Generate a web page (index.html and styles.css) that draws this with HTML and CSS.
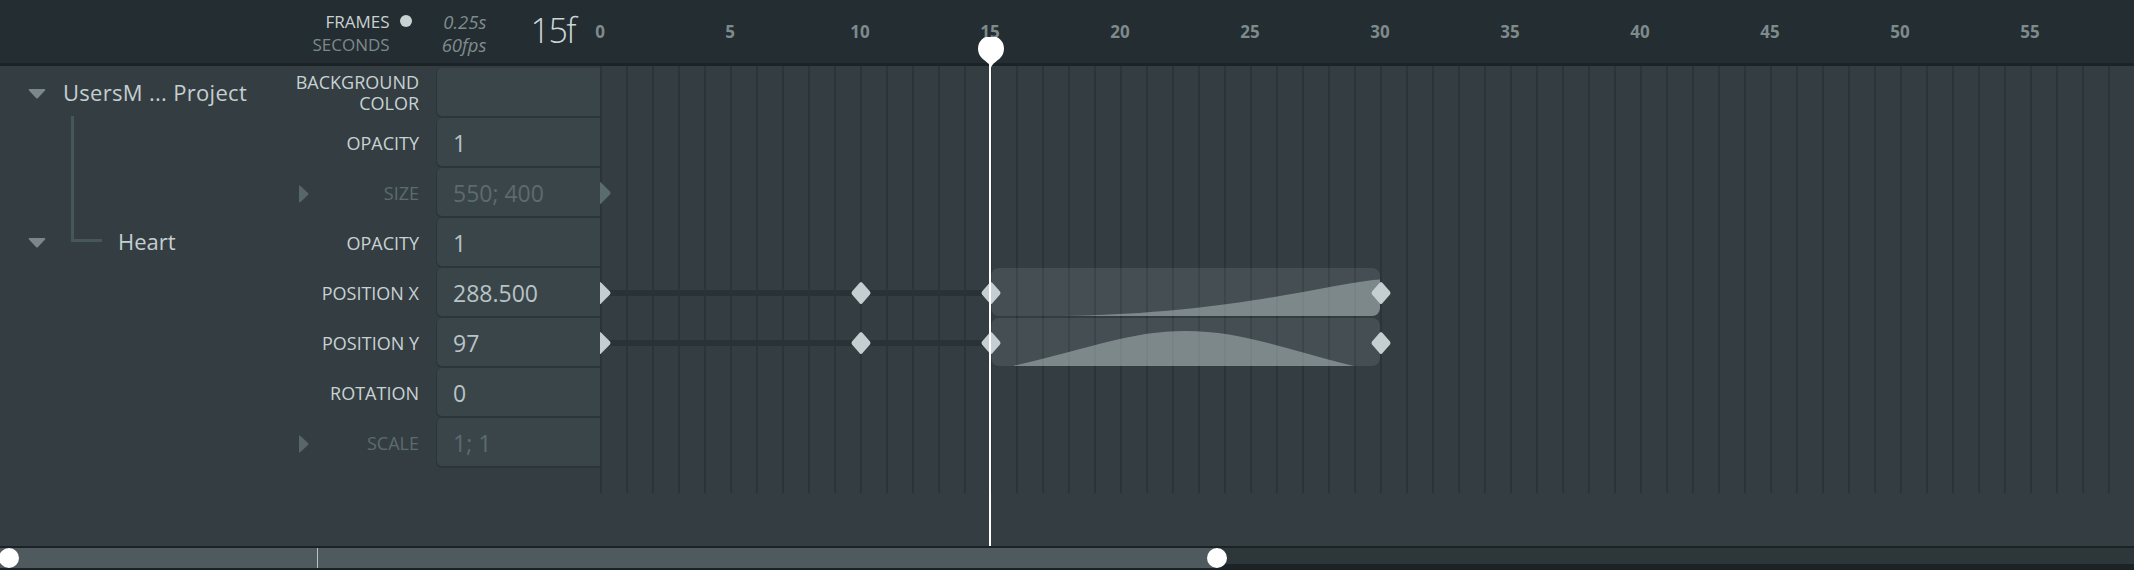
FILE: index.html
```html
<!DOCTYPE html>
<html>
<head>
<meta charset="utf-8">
<title>Timeline</title>
<link rel="stylesheet" href="styles.css">
</head>
<body>
<div class="app">
  <header class="topbar">
    <div class="timefmt">
      <div class="fmt-labels">
        <div class="fmt-row on">FRAMES<span class="dot"></span></div>
        <div class="fmt-row">SECONDS<span class="dot-gap"></span></div>
      </div>
      <div class="fmt-values"><div>0.25s</div><div>60fps</div></div>
      <div class="current">15f</div>
    </div>
    <div class="ruler">
      <div class="tick"><span>0</span></div>
      <div class="tick"><span>5</span></div>
      <div class="tick"><span>10</span></div>
      <div class="tick"><span>15</span></div>
      <div class="tick"><span>20</span></div>
      <div class="tick"><span>25</span></div>
      <div class="tick"><span>30</span></div>
      <div class="tick"><span>35</span></div>
      <div class="tick"><span>40</span></div>
      <div class="tick"><span>45</span></div>
      <div class="tick"><span>50</span></div>
      <div class="tick"><span>55</span></div>
    </div>
  </header>

  <main class="body">
    <aside class="tree">
      <div class="node root">
        <svg class="tri" width="18" height="10" viewBox="0 0 18 10"><path d="M1.5 0H16.5Q18 0 17 1.5L10 9Q9 10 8 9L1 1.5Q0 0 1.5 0Z"/></svg>
        <span class="name">UsersM ... Project</span>
      </div>
      <div class="stem"></div>
      <div class="node child">
        <svg class="tri" width="18" height="10" viewBox="0 0 18 10"><path d="M1.5 0H16.5Q18 0 17 1.5L10 9Q9 10 8 9L1 1.5Q0 0 1.5 0Z"/></svg>
        <span class="elbow"></span>
        <span class="name">Heart</span>
      </div>
    </aside>

    <section class="props">
      <div class="prop">
        <div class="label"><span class="text">BACKGROUND<br>COLOR</span></div>
        <div class="value"></div>
      </div>
      <div class="prop">
        <div class="label"><span class="text">OPACITY</span></div>
        <div class="value">1</div>
      </div>
      <div class="prop dim">
        <div class="label"><svg class="exp" width="10" height="18" viewBox="0 0 10 18"><path d="M0 1.5Q0 0 1.5 1L9 8Q10 9 9 10L1.5 17Q0 18 0 16.5Z"/></svg><span class="text">SIZE</span></div>
        <div class="value">550; 400</div>
      </div>
      <div class="prop">
        <div class="label"><span class="text">OPACITY</span></div>
        <div class="value">1</div>
      </div>
      <div class="prop">
        <div class="label"><span class="text">POSITION X</span></div>
        <div class="value">288.500</div>
      </div>
      <div class="prop">
        <div class="label"><span class="text">POSITION Y</span></div>
        <div class="value">97</div>
      </div>
      <div class="prop">
        <div class="label"><span class="text">ROTATION</span></div>
        <div class="value">0</div>
      </div>
      <div class="prop dim">
        <div class="label"><svg class="exp" width="10" height="18" viewBox="0 0 10 18"><path d="M0 1.5Q0 0 1.5 1L9 8Q10 9 9 10L1.5 17Q0 18 0 16.5Z"/></svg><span class="text">SCALE</span></div>
        <div class="value">1; 1</div>
      </div>
    </section>

    <section class="timeline">
      <div class="grid">
        <div class="track"></div>
        <div class="track"></div>
        <div class="track">
          <svg class="kf-start dim" width="11" height="22" viewBox="0 0 11 22"><path d="M0 0Q1 0 2 1.5L10 9.5Q11 11 10 12.5L2 20.5Q1 22 0 22Z"/></svg>
        </div>
        <div class="track"></div>
        <div class="track">
          <div class="bar" style="left:0px;width:390px"></div>
          <div class="curve" style="left:391px;width:389px">
            <svg width="389" height="48" viewBox="0 0 389 48"><path d="M70 48C230 46 320 20 382 12Q386 11.5 389 11.5V48Z"/></svg>
          </div>
          <svg class="kf-start" width="11" height="22" viewBox="0 0 11 22"><path d="M0 0Q1 0 2 1.5L10 9.5Q11 11 10 12.5L2 20.5Q1 22 0 22Z"/></svg>
          <svg class="kf" style="left:251px" width="20" height="22" viewBox="0 0 20 22"><path d="M10 0Q11 0 12 1.5L19 9.5Q20 11 19 12.5L12 20.5Q11 22 10 22Q9 22 8 20.5L1 12.5Q0 11 1 9.5L8 1.5Q9 0 10 0Z"/></svg>
          <svg class="kf" style="left:381px" width="20" height="22" viewBox="0 0 20 22"><path d="M10 0Q11 0 12 1.5L19 9.5Q20 11 19 12.5L12 20.5Q11 22 10 22Q9 22 8 20.5L1 12.5Q0 11 1 9.5L8 1.5Q9 0 10 0Z"/></svg>
          <svg class="kf" style="left:771px" width="20" height="22" viewBox="0 0 20 22"><path d="M10 0Q11 0 12 1.5L19 9.5Q20 11 19 12.5L12 20.5Q11 22 10 22Q9 22 8 20.5L1 12.5Q0 11 1 9.5L8 1.5Q9 0 10 0Z"/></svg>
        </div>
        <div class="track">
          <div class="bar" style="left:0px;width:390px"></div>
          <div class="curve" style="left:391px;width:389px">
            <svg width="389" height="48" viewBox="0 0 389 48"><path d="M22 48C100 30 140 13 194 13C250 13 290 30 363 48Z"/></svg>
          </div>
          <svg class="kf-start" width="11" height="22" viewBox="0 0 11 22"><path d="M0 0Q1 0 2 1.5L10 9.5Q11 11 10 12.5L2 20.5Q1 22 0 22Z"/></svg>
          <svg class="kf" style="left:251px" width="20" height="22" viewBox="0 0 20 22"><path d="M10 0Q11 0 12 1.5L19 9.5Q20 11 19 12.5L12 20.5Q11 22 10 22Q9 22 8 20.5L1 12.5Q0 11 1 9.5L8 1.5Q9 0 10 0Z"/></svg>
          <svg class="kf" style="left:381px" width="20" height="22" viewBox="0 0 20 22"><path d="M10 0Q11 0 12 1.5L19 9.5Q20 11 19 12.5L12 20.5Q11 22 10 22Q9 22 8 20.5L1 12.5Q0 11 1 9.5L8 1.5Q9 0 10 0Z"/></svg>
          <svg class="kf" style="left:771px" width="20" height="22" viewBox="0 0 20 22"><path d="M10 0Q11 0 12 1.5L19 9.5Q20 11 19 12.5L12 20.5Q11 22 10 22Q9 22 8 20.5L1 12.5Q0 11 1 9.5L8 1.5Q9 0 10 0Z"/></svg>
        </div>
        <div class="track"></div>
        <div class="track"></div>
      </div>
    </section>
  </main>

  <footer class="scroller">
    <div class="range">
      <span class="mark"></span>
      <span class="handle start"></span>
      <span class="handle end"></span>
    </div>
    <div class="rest"></div>
  </footer>

  <div class="playhead" style="left:978px">
    <svg class="knob" width="26" height="31" viewBox="0 0 26 31"><path d="M13 31C12.3 27 7 24 3.8 21A13 13 0 1 1 22.2 21C19 24 13.7 27 13 31Z"/></svg>
    <span class="line"></span>
  </div>
</div>
</body>
</html>
```

FILE: styles.css
```css
html, body {
  margin: 0;
  padding: 0;
}

body {
  background: #343e42;
  font-family: "Open Sans", "Noto Sans", sans-serif;
  width: 2134px;
  height: 570px;
  overflow: hidden;
}

.app {
  position: relative;
  width: 2134px;
  height: 570px;
  overflow: hidden;
  display: flex;
  flex-direction: column;
}

/* ---------- top bar ---------- */
.topbar {
  height: 63px;
  flex: none;
  background: #242d31;
  border-bottom: 3px solid #1b2326;
  display: flex;
}

.timefmt {
  width: 600px;
  flex: none;
  box-sizing: border-box;
  display: flex;
  justify-content: flex-end;
  align-items: flex-start;
  padding: 10px 25px 0 0;
}

.fmt-labels {
  text-align: right;
  font-size: 17px;
  line-height: 23px;
  color: #7d8a8c;
}

.fmt-row.on {
  color: #c8d1d2;
}

.dot,
.dot-gap {
  display: inline-block;
  width: 12px;
  height: 12px;
  margin-left: 10px;
  vertical-align: 1px;
  border-radius: 50%;
}

.dot {
  background: #c9d2d3;
}

.fmt-values {
  margin-left: 30px;
  font-style: italic;
  font-size: 18.5px;
  line-height: 23px;
  color: #7f8c8e;
  text-align: right;
}

.current {
  margin-left: 44px;
  font-size: 34px;
  font-weight: 300;
  line-height: 40px;
  letter-spacing: -1.5px;
  color: #cdd6d7;
}

.ruler {
  flex: none;
  display: flex;
  padding-top: 22px;
}

.tick {
  width: 130px;
  flex: none;
  font-size: 17px;
  font-weight: 700;
  line-height: 20px;
  color: #7d8b8d;
}

.tick span {
  display: inline-block;
  transform: translateX(-50%);
}

/* ---------- body ---------- */
.body {
  height: 480px;
  flex: none;
  display: flex;
}

.tree {
  width: 260px;
  flex: none;
  box-sizing: border-box;
  padding: 1px 0 0 28px;
}

.node {
  display: flex;
  align-items: center;
}

.root {
  height: 49px;
}

.tri {
  flex: none;
  fill: #7b8789;
  margin-top: 4px;
}

.name {
  font-size: 22px;
  line-height: 28px;
  color: #c4cfd0;
  white-space: nowrap;
}

.root .name {
  margin-left: 17px;
  letter-spacing: 0.3px;
}

.stem {
  width: 3px;
  height: 113px;
  margin-left: 43px;
  background: #465757;
}

.child {
  height: 24px;
}

.elbow {
  align-self: flex-start;
  width: 28px;
  height: 10px;
  margin-left: 25px;
  border-left: 3px solid #465757;
  border-bottom: 3px solid #465757;
}

.child .name {
  margin-left: 16px;
}

.props {
  width: 340px;
  flex: none;
  box-sizing: border-box;
  padding-top: 2px;
}

.prop {
  height: 50px;
  display: flex;
}

.label {
  flex: 1;
  min-width: 0;
  display: flex;
  align-items: center;
  justify-content: flex-end;
  height: 48px;
  margin-right: 18px;
  padding-top: 2px;
  box-sizing: border-box;
  font-size: 18px;
  line-height: 21px;
  color: #c8d2d3;
}

.label .text {
  text-align: right;
  white-space: nowrap;
}

.exp {
  flex: none;
  margin: 2px auto 0 39px;
  fill: #56666a;
}

.value {
  flex: none;
  width: 163px;
  height: 48px;
  box-sizing: border-box;
  display: flex;
  align-items: center;
  padding: 1px 0 0 16px;
  background: #3a454a;
  border-radius: 5px 0 0 5px;
  box-shadow: 0 1px 0 1px #2c3639;
  font-size: 23px;
  color: #b8c3c5;
}

.prop.dim .label,
.prop.dim .value {
  color: #5c6b6e;
}

/* ---------- timeline ---------- */
.timeline {
  flex: 1;
  min-width: 0;
  overflow: hidden;
}

.grid {
  height: 427px;
  box-sizing: border-box;
  padding-top: 2px;
  background-image: repeating-linear-gradient(90deg, #2b3437 0 2px, transparent 2px 26px);
}

.track {
  position: relative;
  height: 50px;
}

.bar {
  position: absolute;
  top: 22px;
  height: 6px;
  background: #293235;
}

.curve {
  position: absolute;
  top: 0;
  height: 48px;
  border-radius: 8px;
  overflow: hidden;
  background: rgba(255, 255, 255, 0.085);
}

.curve svg {
  display: block;
  fill: rgba(190, 202, 204, 0.47);
}

.kf,
.kf-start {
  position: absolute;
  top: 14px;
  fill: #c5cfd1;
}

.kf-start {
  left: 0;
}

.kf-start.dim {
  fill: #5a6c6e;
}

/* ---------- scroller ---------- */
.scroller {
  flex: none;
  height: 24px;
  box-sizing: border-box;
  padding-top: 2px;
  background: #1b2326;
  display: flex;
  align-items: flex-start;
}

.range {
  position: relative;
  width: 1218px;
  height: 20px;
  flex: none;
  background: #4f5a5f;
}

.rest {
  flex: 1;
  height: 16px;
  background: #2d3639;
}

.mark {
  position: absolute;
  left: 317px;
  top: 0;
  width: 1px;
  height: 20px;
  background: #b9c2c4;
}

.handle {
  position: absolute;
  top: 0;
  width: 20px;
  height: 20px;
  border-radius: 50%;
  background: #ffffff;
}

.handle.start {
  left: -1px;
}

.handle.end {
  left: 1207px;
}

/* ---------- playhead ---------- */
.playhead {
  position: absolute;
  top: 37px;
  width: 26px;
  height: 509px;
}

.knob {
  position: absolute;
  left: 0;
  top: 0;
  fill: #ffffff;
}

.line {
  position: absolute;
  left: 11px;
  top: 3px;
  width: 2px;
  height: 506px;
  background: #ffffff;
}
```
